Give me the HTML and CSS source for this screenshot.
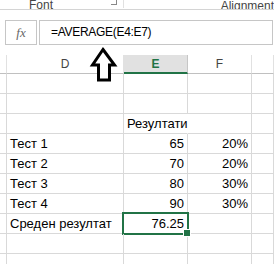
FILE: index.html
```html
<!DOCTYPE html>
<html>
<head>
    <title>Sheet</title>
    <link rel="stylesheet" href="styles.css">
</head>
<body>
  <div class="window">
    <div class="ribbon">
        <div class="group group-font">
            <span class="group-label">Font</span>
            <span class="launcher"></span>
        </div>
        <div class="group group-align">
            <span class="group-label">Alignment</span>
        </div>
    </div>

    <div class="formula-bar">
        <div class="fx-box"><span class="fx">fx</span></div>
        <div class="formula-input">=AVERAGE(E4:E7)</div>
    </div>

    <!-- arrow pointing at the formula -->
    <svg class="pointer" width="32" height="40" viewBox="0 0 32 40">
        <polygon points="15,5.5 26.5,21 21.5,21 21.5,36 10.5,36 10.5,21 4.5,21"
                 fill="#fff" stroke="#000" stroke-width="3" stroke-linejoin="miter"/>
    </svg>

    <div class="sheet">
        <div class="col-head stub"></div>
        <div class="col-head">D</div>
        <div class="col-head selected">E</div>
        <div class="col-head">F</div>
        <div class="col-head"></div>

        <div class="cell stub"></div><div class="cell"></div><div class="cell"></div><div class="cell"></div><div class="cell"></div>
        <div class="cell stub"></div><div class="cell"></div><div class="cell"></div><div class="cell"></div><div class="cell"></div>

        <div class="cell stub"></div><div class="cell"></div><div class="cell overflow">Резултати</div><div class="cell"></div><div class="cell"></div>
        <div class="cell stub"></div><div class="cell">Тест 1</div><div class="cell num">65</div><div class="cell num">20%</div><div class="cell"></div>
        <div class="cell stub"></div><div class="cell">Тест 2</div><div class="cell num">70</div><div class="cell num">20%</div><div class="cell"></div>
        <div class="cell stub"></div><div class="cell">Тест 3</div><div class="cell num">80</div><div class="cell num">30%</div><div class="cell"></div>
        <div class="cell stub"></div><div class="cell">Тест 4</div><div class="cell num">90</div><div class="cell num">30%</div><div class="cell"></div>
        <div class="cell stub"></div><div class="cell">Среден резултат</div><div class="cell num active">76.25</div><div class="cell"></div><div class="cell"></div>

        <div class="cell stub"></div><div class="cell"></div><div class="cell"></div><div class="cell"></div><div class="cell"></div>
        <div class="cell stub"></div><div class="cell"></div><div class="cell"></div><div class="cell"></div><div class="cell"></div>
    </div>
  </div>
</body>
</html>
```

FILE: styles.css
```css
* {
    margin: 0;
    padding: 0;
    box-sizing: border-box;
}

body {
    font-family: "Liberation Sans", Arial, sans-serif;
    background-color: #fff;
    color: #000;
}

.window {
    position: relative;
    width: 274px;
    height: 264px;
    overflow: hidden;
}

/* ribbon strip, cut off at the top */
.ribbon {
    display: flex;
    height: 10px;
    border-bottom: 1px solid #d4d4d4;
    overflow: hidden;
}

.group {
    display: flex;
    align-items: flex-end;
    height: 9px;
}

.group-font {
    width: 153px;
    padding-left: 29px;
    border-right: 1px solid #e1e1e1;
    height: 8px;
}

.group-label {
    font-size: 12px;
    line-height: 12px;
    color: #444;
    margin-bottom: -3px;
    white-space: nowrap;
}

.launcher {
    width: 6px;
    height: 5px;
    margin-left: auto;
    margin-right: 6px;
    margin-bottom: 3px;
    border-right: 1px solid #888;
    border-bottom: 1px solid #888;
}

.group-align {
    padding-left: 97px;
}

/* formula bar */
.formula-bar {
    display: flex;
    gap: 2px;
    height: 25px;
    margin: 10px 1px 0 5px;
}

.fx-box {
    width: 32px;
    border: 1px solid #c6c6c6;
    display: flex;
    align-items: center;
    justify-content: center;
}

.fx {
    font-family: "Liberation Serif", serif;
    font-style: italic;
    font-size: 13px;
    color: #666;
}

.formula-input {
    flex: 1;
    border: 1px solid #c6c6c6;
    font-size: 12px;
    letter-spacing: -0.3px;
    line-height: 23px;
    padding-left: 11px;
}

.pointer {
    position: absolute;
    left: 88px;
    top: 44px;
}

/* worksheet grid */
.sheet {
    display: grid;
    grid-template-columns: 7px 117px 64px 64px 1fr;
    grid-template-rows: 19px;
    grid-auto-rows: 20px;
    margin-top: 10px;
}

.col-head {
    font-size: 12px;
    line-height: 18px;
    color: #444;
    text-align: center;
    border-bottom: 1px solid #c0c0c0;
    border-right: 1px solid #e1e1e1;
}

.col-head.selected {
    background-color: #e1e1e1;
    color: #217346;
    font-weight: bold;
    border-bottom: 2px solid #217346;
    border-right-color: #c6c6c6;
}

.cell {
    position: relative;
    font-size: 13px;
    line-height: 19px;
    padding: 0 3px;
    white-space: nowrap;
    border-right: 1px solid #d9d9d9;
    border-bottom: 1px solid #d9d9d9;
}

.cell.num {
    text-align: right;
}

.cell.overflow {
    overflow: visible;
    border-right-color: transparent;
}

.cell.active::after {
    content: "";
    position: absolute;
    left: -2px;
    top: -2px;
    right: -2px;
    bottom: -2px;
    border: 2px solid #217346;
}

.cell.active::before {
    content: "";
    position: absolute;
    right: -4px;
    bottom: -4px;
    width: 6px;
    height: 6px;
    background-color: #217346;
    border: 1px solid #fff;
    z-index: 1;
}
```
